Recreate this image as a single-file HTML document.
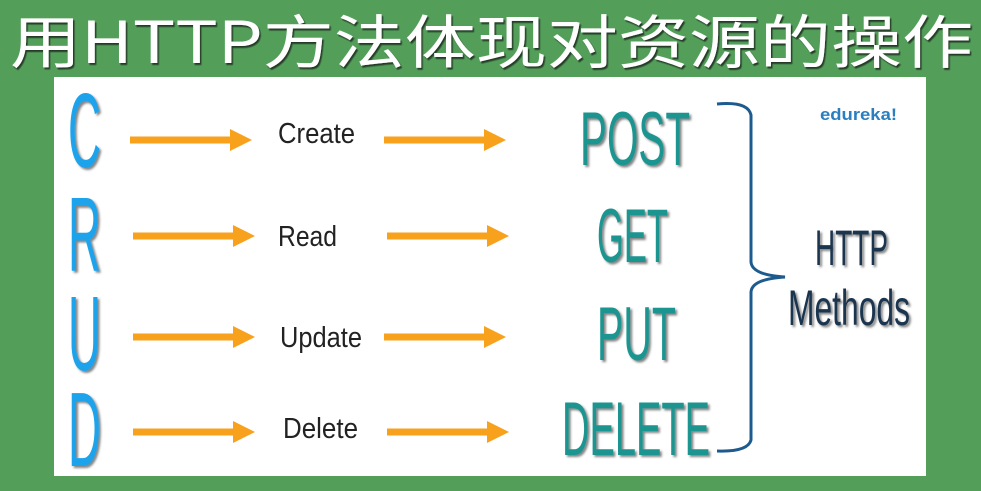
<!DOCTYPE html>
<html><head><meta charset="utf-8"><style>
html,body{margin:0;padding:0;background:#539f5a;width:981px;height:491px;overflow:hidden}
svg{display:block}
</style></head><body>
<svg width="981" height="491" viewBox="0 0 981 491" xmlns="http://www.w3.org/2000/svg">
<rect width="981" height="491" fill="#539f5a"/>
<defs>
<filter id="sh" x="-10%" y="-10%" width="130%" height="130%"><feDropShadow dx="2" dy="2" stdDeviation="1" flood-color="#333" flood-opacity="0.6"/></filter>
<filter id="sh2" x="-10%" y="-10%" width="130%" height="130%"><feDropShadow dx="1.5" dy="2" stdDeviation="0.6" flood-color="#111" flood-opacity="0.7"/></filter>
</defs>
<text x="10" y="63" font-family="'Noto Sans CJK SC',sans-serif" font-size="58" fill="#fff" textLength="963" lengthAdjust="spacingAndGlyphs" filter="url(#sh2)">用HTTP方法体现对资源的操作</text>
<rect x="54" y="77" width="872" height="399" fill="#fff"/>
<g font-family="'Liberation Sans',sans-serif" fill="#1ba3ec" filter="url(#sh)">
<text x="68" y="167" font-size="106" textLength="33" lengthAdjust="spacingAndGlyphs">C</text>
<text x="68" y="271" font-size="106" textLength="33" lengthAdjust="spacingAndGlyphs">R</text>
<text x="68" y="370" font-size="106" textLength="33" lengthAdjust="spacingAndGlyphs">U</text>
<text x="68" y="466" font-size="106" textLength="33" lengthAdjust="spacingAndGlyphs">D</text>
</g>
<g stroke="#f7a11c" stroke-width="7" fill="#f7a11c">
<line x1="130" y1="140" x2="232" y2="140"/><polygon points="230,129 252,140 230,151" stroke="none"/>
<line x1="384" y1="140" x2="486" y2="140"/><polygon points="484,129 506,140 484,151" stroke="none"/>
<line x1="133" y1="236" x2="235" y2="236"/><polygon points="233,225 255,236 233,247" stroke="none"/>
<line x1="387" y1="236" x2="489" y2="236"/><polygon points="487,225 509,236 487,247" stroke="none"/>
<line x1="133" y1="337" x2="235" y2="337"/><polygon points="233,326 255,337 233,348" stroke="none"/>
<line x1="384" y1="337" x2="486" y2="337"/><polygon points="484,326 506,337 484,348" stroke="none"/>
<line x1="133" y1="432" x2="235" y2="432"/><polygon points="233,421 255,432 233,443" stroke="none"/>
<line x1="387" y1="432" x2="489" y2="432"/><polygon points="487,421 509,432 487,443" stroke="none"/>
</g>
<g font-family="'Liberation Sans',sans-serif" fill="#222" font-size="29">
<text x="278" y="143" textLength="77" lengthAdjust="spacingAndGlyphs">Create</text>
<text x="278" y="246" textLength="59" lengthAdjust="spacingAndGlyphs">Read</text>
<text x="280" y="347" textLength="82" lengthAdjust="spacingAndGlyphs">Update</text>
<text x="283" y="438" textLength="75" lengthAdjust="spacingAndGlyphs">Delete</text>
</g>
<g font-family="'Liberation Sans',sans-serif" fill="#1a9590" font-size="76" filter="url(#sh)">
<text x="580" y="165" textLength="110" lengthAdjust="spacingAndGlyphs">POST</text>
<text x="597" y="262" textLength="71" lengthAdjust="spacingAndGlyphs">GET</text>
<text x="597" y="360" textLength="79" lengthAdjust="spacingAndGlyphs">PUT</text>
<text x="562" y="455" textLength="148" lengthAdjust="spacingAndGlyphs">DELETE</text>
</g>
<path d="M717,104 Q748,101 751,115 L751,262 Q752,275 785,277 Q752,279 751,292 L751,440 Q748,452 717,451" fill="none" stroke="#1d5b8f" stroke-width="3"/>
<text x="820" y="120" font-family="'Liberation Sans',sans-serif" font-weight="bold" font-size="17" fill="#2a7fc1" textLength="77" lengthAdjust="spacingAndGlyphs">edureka!</text>
<g font-family="'Liberation Sans',sans-serif" fill="#1c3550" font-size="50" filter="url(#sh)">
<text x="815" y="265" textLength="73" lengthAdjust="spacingAndGlyphs">HTTP</text>
<text x="788" y="325" textLength="122" lengthAdjust="spacingAndGlyphs">Methods</text>
</g>
</svg>
</body></html>
